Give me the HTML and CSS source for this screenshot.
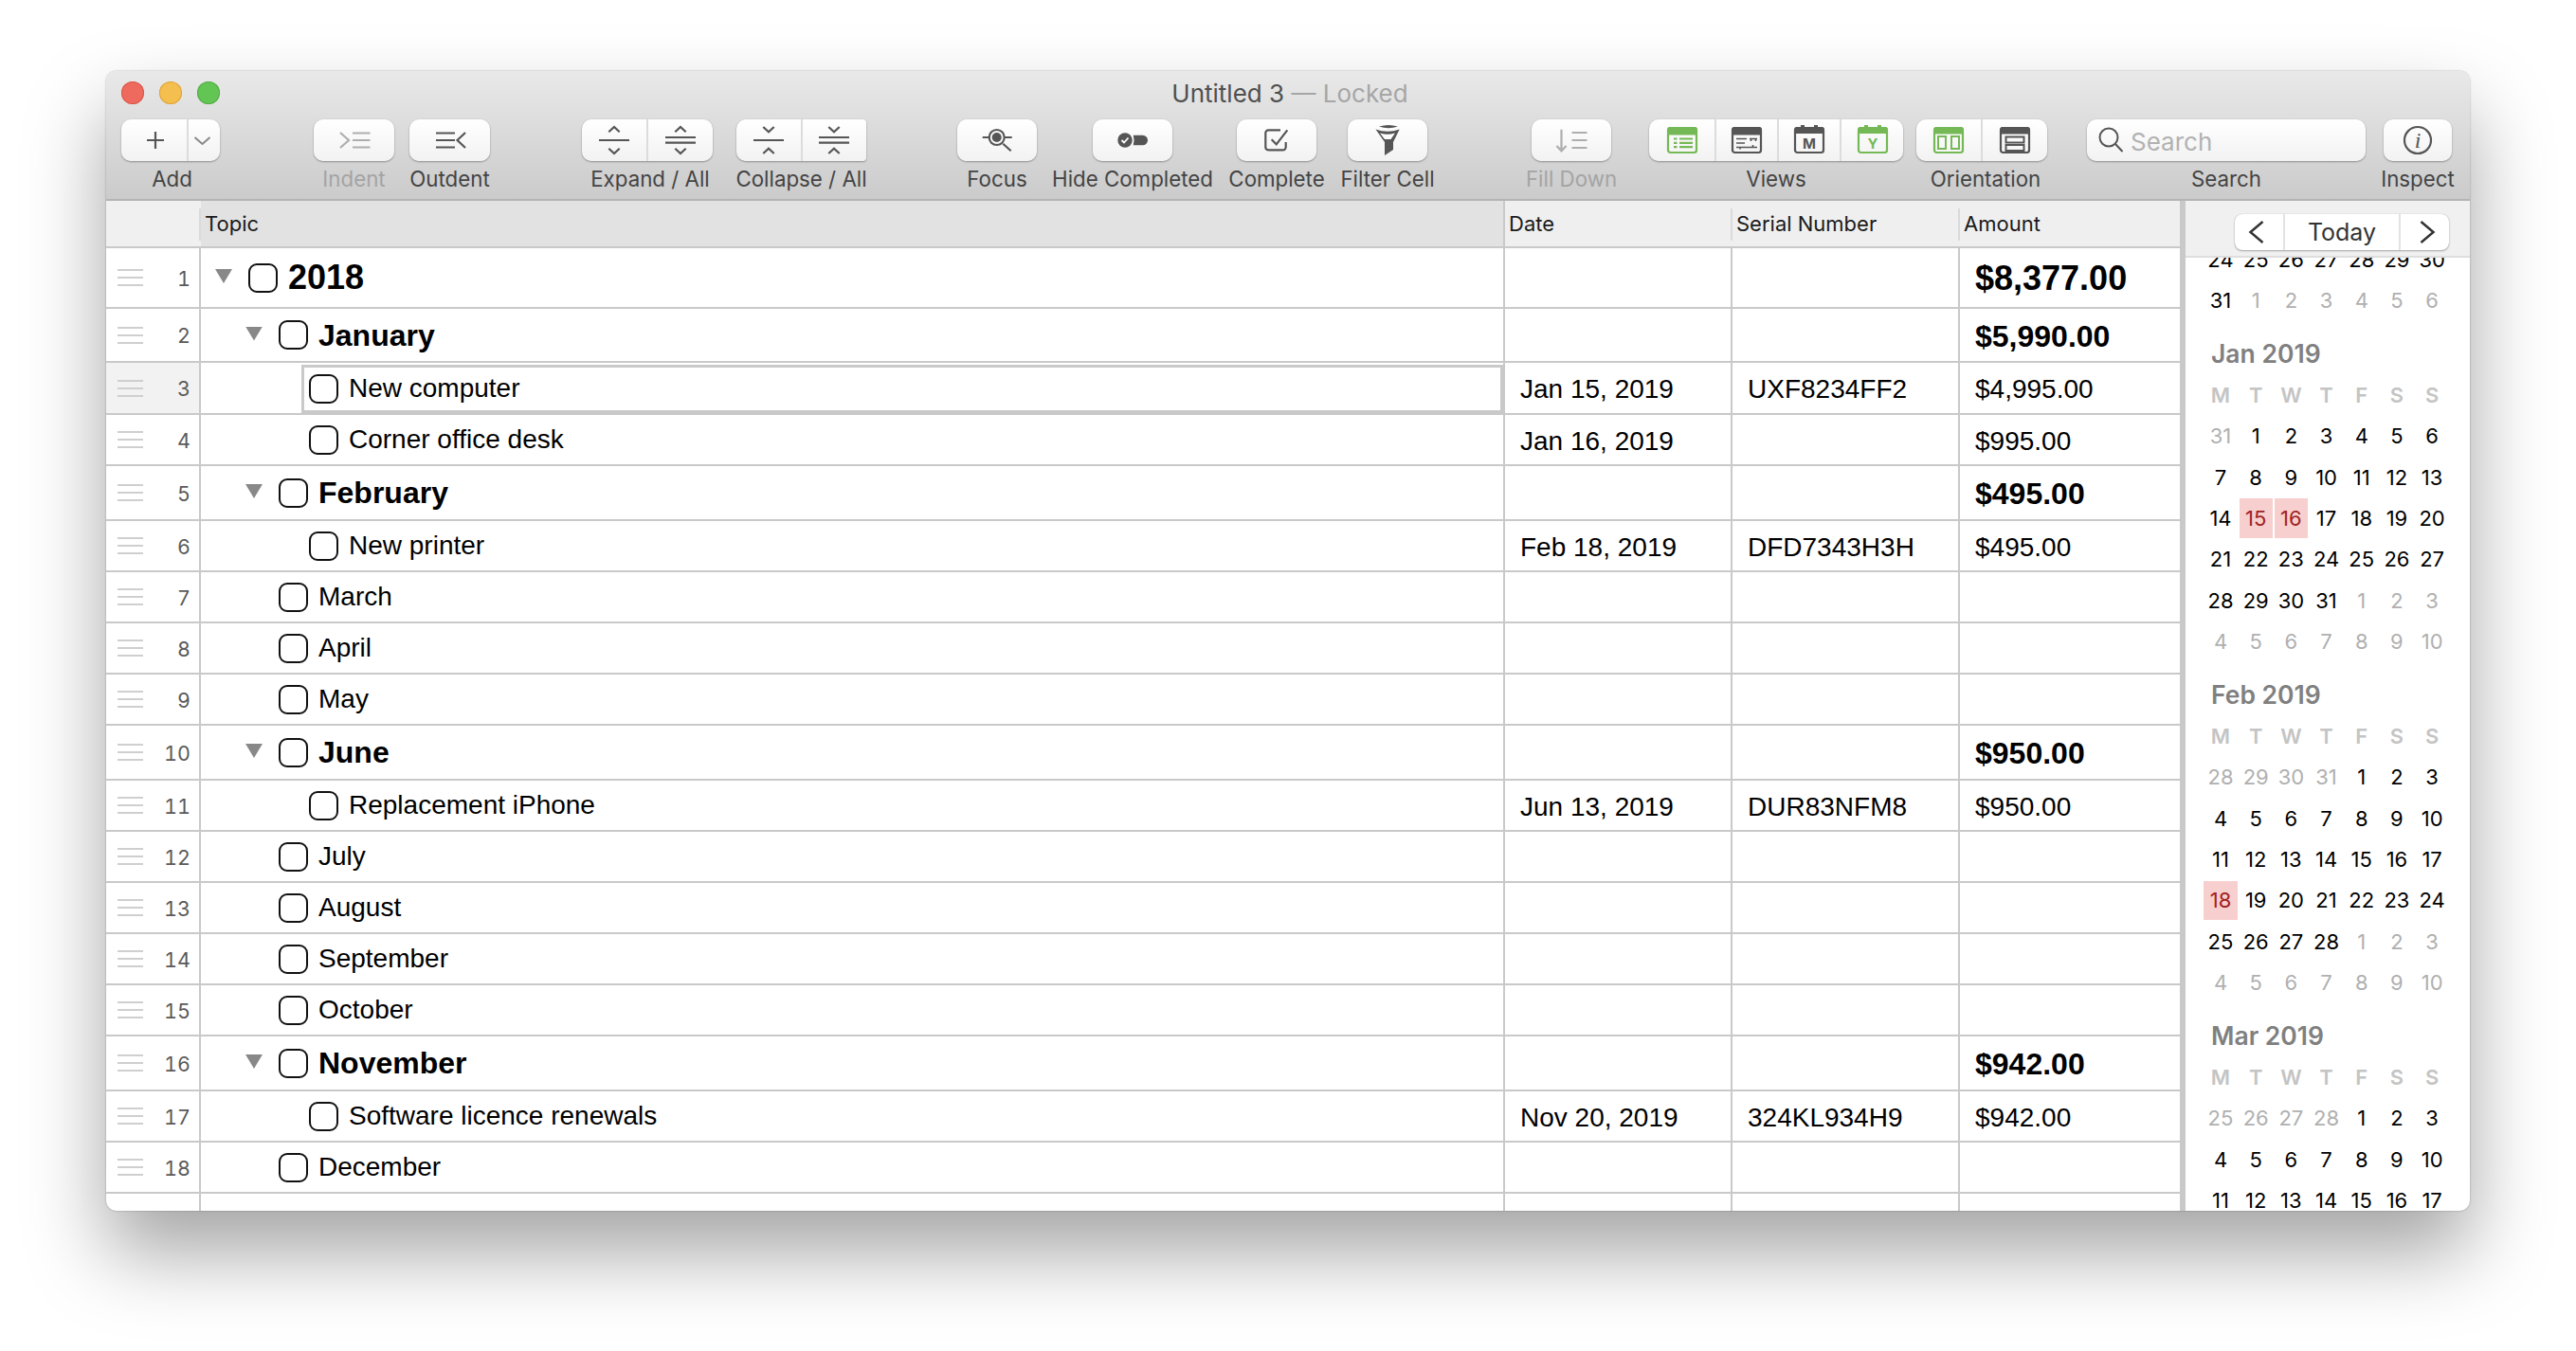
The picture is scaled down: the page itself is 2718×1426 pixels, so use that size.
FILE: index.html
```html
<!DOCTYPE html>
<html lang="en">
<head>
<meta charset="utf-8">
<title>Untitled 3 — Locked</title>
<link rel="stylesheet" href="styles.css">
</head>
<body>
<div class="window">
  <header class="chrome">
    <div class="titlebar">
      <div class="lights"><i class="light red"></i><i class="light yellow"></i><i class="light green"></i></div>
      <div class="title">Untitled 3 <span class="locked">— Locked</span></div>
      <div></div>
    </div>
    <div class="toolbar">
      <div class="tool t-add">
        <div class="btn">
          <div class="seg grow"><svg class="ic" viewBox="0 0 44 44"><path d="M23 13V31M14 22H32"/></svg></div>
          <div class="seg s-menu"><svg class="ic soft" viewBox="0 0 36 44"><path d="M7.500 19L15.500 26L23.500 19"/></svg></div>
        </div>
        <span class="lbl">Add</span>
      </div>
      <div class="tool t-indent">
        <div class="btn"><div class="seg grow"><svg class="ic dim" viewBox="0 0 44 44"><path d="M7 14L16 22L7 30M20 14.5H38.500M20 22H38.500M20 29.500H38.500"/></svg></div></div>
        <span class="lbl off">Indent</span>
      </div>
      <div class="tool t-outdent">
        <div class="btn"><div class="seg grow"><svg class="ic" viewBox="0 0 44 44"><path d="M38 14L29.500 22L38 30M7 14.5H27M7 22H27M7 29.500H27"/></svg></div></div>
        <span class="lbl">Outdent</span>
      </div>
      <div class="tool t-expand">
        <div class="btn">
          <div class="seg grow"><svg class="ic" viewBox="0 0 44 44"><path d="M16.3 13.300L22 8L27.700 13.300M6 22H38M16.300 30.700L22 36L27.700 30.700"/></svg></div>
          <div class="seg grow"><svg class="ic" viewBox="0 0 44 44"><path d="M16.3 13.300L22 8L27.700 13.300M6 19H38M6 24.700H38M16.300 30.700L22 36L27.700 30.700"/></svg></div>
        </div>
        <span class="lbl">Expand / All</span>
      </div>
      <div class="tool t-collapse">
        <div class="btn sharp">
          <div class="seg grow"><svg class="ic" viewBox="0 0 44 44"><path d="M16.3 8L22 13.300L27.700 8M6 22H38M16.300 36L22 30.700L27.700 36"/></svg></div>
          <div class="seg grow"><svg class="ic" viewBox="0 0 44 44"><path d="M16.3 8L22 13.300L27.700 8M6 19H38M6 24.700H38M16.300 36L22 30.700L27.700 36"/></svg></div>
        </div>
        <span class="lbl">Collapse / All</span>
      </div>
      <div class="tool t-focus">
        <div class="btn"><div class="seg grow"><svg class="ic" viewBox="0 0 44 44"><circle cx="21.700" cy="19" r="8"/><circle class="solid" cx="21.700" cy="19" r="5"/><path d="M6.700 19H13M30 19H37.700M28.300 25.700L36.700 33.300"/></svg></div></div>
        <span class="lbl">Focus</span>
      </div>
      <div class="tool t-hide">
        <div class="btn"><div class="seg grow"><svg class="ic" viewBox="0 0 44 44"><circle class="solid" cx="14" cy="22" r="7.700"/><path class="tick" d="M10.500 22L13 24.500L17.500 19.500"/><path class="solid" d="M22.700 16.700H32.700A5.300 5.300 0 0 1 32.700 27.300H22.700Q24.500 22 22.700 16.700Z"/></svg></div></div>
        <span class="lbl">Hide Completed</span>
      </div>
      <div class="tool t-complete">
        <div class="btn"><div class="seg grow"><svg class="ic" viewBox="0 0 44 44"><path d="M26 11.300H13.300A3 3 0 0 0 10.300 14.300V29.300A3 3 0 0 0 13.300 32.300H28.700A3 3 0 0 0 31.700 29.300V24M16.700 21.300L21.700 26.300L33.300 11.300"/></svg></div></div>
        <span class="lbl">Complete</span>
      </div>
      <div class="tool t-filter">
        <div class="btn"><div class="seg grow"><svg class="ic" viewBox="0 0 44 44"><path class="solid" d="M13 7.500Q23 4.500 33 7.500Q23 11 13 7.500Z"/><path class="solid" d="M9.500 10.500Q22 15 34.700 10.500L28 24V32L19 38V24Z"/><path class="hole" d="M14 14.500Q22 17 30 14.500L25.500 21H19Z"/></svg></div></div>
        <span class="lbl">Filter Cell</span>
      </div>
      <div class="tool t-fill">
        <div class="btn"><div class="seg grow"><svg class="ic dim" viewBox="0 0 44 44"><path d="M11.500 10.700V33.300M6.500 28L11.500 33.300L16.500 28M22.500 14H38.500M22.500 22H38.500M22.500 30H38.500"/></svg></div></div>
        <span class="lbl off">Fill Down</span>
      </div>
      <div class="tool t-views">
        <div class="btn">
          <div class="seg grow"><svg class="ic grn" viewBox="0 0 44 44"><rect x="7" y="9" width="30" height="26" rx="2.500"/><path class="solid" d="M6 11A3 3 0 0 1 9 8H35A3 3 0 0 1 38 11V16.500H6Z"/><path d="M13 20.500H16.500M19 20.500H33M13 24.800H16.500M19 24.800H33M13 29.100H16.500M19 29.100H33"/></svg></div>
          <div class="seg s-view2"><svg class="ic" viewBox="0 0 44 44"><rect x="7" y="9" width="30" height="26" rx="2.500"/><path class="solid" d="M6 11A3 3 0 0 1 9 8H35A3 3 0 0 1 38 11V16.500H6Z"/><path class="thin" d="M11 20.500H22M25 20.500H33M26.500 20.500V23M31.500 20.500V23M11 25H20M11 29.500H33M15 29.500V31.500M28.500 27V29.500"/></svg></div>
          <div class="seg s-view3"><svg class="ic" viewBox="0 0 44 44"><rect x="7" y="9" width="30" height="26" rx="2.500"/><path class="solid" d="M6 11A3 3 0 0 1 9 8H13V6H17V8H27V6H31V8H35A3 3 0 0 1 38 11V15H6Z"/><text class="cal-letter" x="22" y="30.500">M</text></svg></div>
          <div class="seg s-view4"><svg class="ic grn" viewBox="0 0 44 44"><rect x="7" y="9" width="30" height="26" rx="2.500"/><path class="solid" d="M6 11A3 3 0 0 1 9 8H13V6H17V8H27V6H31V8H35A3 3 0 0 1 38 11V15H6Z"/><text class="cal-letter" x="22" y="30.500">Y</text></svg></div>
        </div>
        <span class="lbl">Views</span>
      </div>
      <div class="tool t-orient">
        <div class="btn">
          <div class="seg grow"><svg class="ic grn" viewBox="0 0 44 44"><rect x="7" y="9" width="30" height="26" rx="2.500"/><path class="solid" d="M6 11A3 3 0 0 1 9 8H35A3 3 0 0 1 38 11V15.500H6Z"/><path class="mid" d="M11 18H19V31H11ZM25 18H33V31H25Z"/></svg></div>
          <div class="seg grow"><svg class="ic" viewBox="0 0 44 44"><rect x="7" y="9" width="30" height="26" rx="2.500"/><path class="solid" d="M6 11A3 3 0 0 1 9 8H35A3 3 0 0 1 38 11V15.500H6Z"/><path class="mid" d="M12.500 18.500H31.500V24.500H12.500ZM12.500 27H31.500V33H12.500Z"/></svg></div>
        </div>
        <span class="lbl">Orientation</span>
      </div>
      <div class="tool t-search">
        <div class="btn searchbox">
          <svg class="ic s-glass" viewBox="0 0 32 32"><circle cx="14" cy="14" r="9.500"/><path d="M21 21L28.500 29"/></svg>
          <span class="placeholder">Search</span>
        </div>
        <span class="lbl">Search</span>
      </div>
      <div class="tool t-inspect">
        <div class="btn"><div class="seg grow"><svg class="ic" viewBox="0 0 44 44"><circle cx="22" cy="22" r="14"/><text class="info-i" x="22" y="30">i</text></svg></div></div>
        <span class="lbl">Inspect</span>
      </div>
    </div>
  </header>

  <div class="main">
    <section class="table">
      <div class="row head">
        <div class="hcell h-gutter"></div>
        <div class="hcell h-topic">Topic</div>
        <div class="hcell h-sep">Date</div>
        <div class="hcell h-sep">Serial Number</div>
        <div class="hcell">Amount</div>
      </div>

      <div class="row r-top b0">
        <div class="gutter"><i class="grip"></i><span class="num">1</span></div>
        <div class="cell topic l0"><span class="twist"><i class="tri"></i></span><i class="check"></i><span class="name">2018</span></div>
        <div class="cell"></div><div class="cell"></div>
        <div class="cell amt">$8,377.00</div>
      </div>
      <div class="row r-jan b1">
        <div class="gutter"><i class="grip"></i><span class="num">2</span></div>
        <div class="cell topic l1"><span class="twist"><i class="tri"></i></span><i class="check"></i><span class="name">January</span></div>
        <div class="cell"></div><div class="cell"></div>
        <div class="cell amt">$5,990.00</div>
      </div>
      <div class="row r-sel">
        <div class="gutter sel-g"><i class="grip"></i><span class="num">3</span></div>
        <div class="cell topic"><div class="selbox"><i class="check"></i><span class="name">New computer</span></div></div>
        <div class="cell">Jan 15, 2019</div>
        <div class="cell">UXF8234FF2</div>
        <div class="cell amt">$4,995.00</div>
      </div>
      <div class="row r-n">
        <div class="gutter"><i class="grip"></i><span class="num">4</span></div>
        <div class="cell topic l2"><span class="twist"></span><i class="check"></i><span class="name">Corner office desk</span></div>
        <div class="cell">Jan 16, 2019</div>
        <div class="cell"></div>
        <div class="cell amt">$995.00</div>
      </div>
      <div class="row r-b b1">
        <div class="gutter"><i class="grip"></i><span class="num">5</span></div>
        <div class="cell topic l1"><span class="twist"><i class="tri"></i></span><i class="check"></i><span class="name">February</span></div>
        <div class="cell"></div><div class="cell"></div>
        <div class="cell amt">$495.00</div>
      </div>
      <div class="row r-n">
        <div class="gutter"><i class="grip"></i><span class="num">6</span></div>
        <div class="cell topic l2"><span class="twist"></span><i class="check"></i><span class="name">New printer</span></div>
        <div class="cell">Feb 18, 2019</div>
        <div class="cell">DFD7343H3H</div>
        <div class="cell amt">$495.00</div>
      </div>
      <div class="row r-n">
        <div class="gutter"><i class="grip"></i><span class="num">7</span></div>
        <div class="cell topic l1"><span class="twist"></span><i class="check"></i><span class="name">March</span></div>
        <div class="cell"></div><div class="cell"></div><div class="cell"></div>
      </div>
      <div class="row r-n">
        <div class="gutter"><i class="grip"></i><span class="num">8</span></div>
        <div class="cell topic l1"><span class="twist"></span><i class="check"></i><span class="name">April</span></div>
        <div class="cell"></div><div class="cell"></div><div class="cell"></div>
      </div>
      <div class="row r-n">
        <div class="gutter"><i class="grip"></i><span class="num">9</span></div>
        <div class="cell topic l1"><span class="twist"></span><i class="check"></i><span class="name">May</span></div>
        <div class="cell"></div><div class="cell"></div><div class="cell"></div>
      </div>
      <div class="row r-b b1">
        <div class="gutter"><i class="grip"></i><span class="num">10</span></div>
        <div class="cell topic l1"><span class="twist"><i class="tri"></i></span><i class="check"></i><span class="name">June</span></div>
        <div class="cell"></div><div class="cell"></div>
        <div class="cell amt">$950.00</div>
      </div>
      <div class="row r-n">
        <div class="gutter"><i class="grip"></i><span class="num">11</span></div>
        <div class="cell topic l2"><span class="twist"></span><i class="check"></i><span class="name">Replacement iPhone</span></div>
        <div class="cell">Jun 13, 2019</div>
        <div class="cell">DUR83NFM8</div>
        <div class="cell amt">$950.00</div>
      </div>
      <div class="row r-n">
        <div class="gutter"><i class="grip"></i><span class="num">12</span></div>
        <div class="cell topic l1"><span class="twist"></span><i class="check"></i><span class="name">July</span></div>
        <div class="cell"></div><div class="cell"></div><div class="cell"></div>
      </div>
      <div class="row r-n">
        <div class="gutter"><i class="grip"></i><span class="num">13</span></div>
        <div class="cell topic l1"><span class="twist"></span><i class="check"></i><span class="name">August</span></div>
        <div class="cell"></div><div class="cell"></div><div class="cell"></div>
      </div>
      <div class="row r-n">
        <div class="gutter"><i class="grip"></i><span class="num">14</span></div>
        <div class="cell topic l1"><span class="twist"></span><i class="check"></i><span class="name">September</span></div>
        <div class="cell"></div><div class="cell"></div><div class="cell"></div>
      </div>
      <div class="row r-n">
        <div class="gutter"><i class="grip"></i><span class="num">15</span></div>
        <div class="cell topic l1"><span class="twist"></span><i class="check"></i><span class="name">October</span></div>
        <div class="cell"></div><div class="cell"></div><div class="cell"></div>
      </div>
      <div class="row r-b b1">
        <div class="gutter"><i class="grip"></i><span class="num">16</span></div>
        <div class="cell topic l1"><span class="twist"><i class="tri"></i></span><i class="check"></i><span class="name">November</span></div>
        <div class="cell"></div><div class="cell"></div>
        <div class="cell amt">$942.00</div>
      </div>
      <div class="row r-n">
        <div class="gutter"><i class="grip"></i><span class="num">17</span></div>
        <div class="cell topic l2"><span class="twist"></span><i class="check"></i><span class="name">Software licence renewals</span></div>
        <div class="cell">Nov 20, 2019</div>
        <div class="cell">324KL934H9</div>
        <div class="cell amt">$942.00</div>
      </div>
      <div class="row r-n">
        <div class="gutter"><i class="grip"></i><span class="num">18</span></div>
        <div class="cell topic l1"><span class="twist"></span><i class="check"></i><span class="name">December</span></div>
        <div class="cell"></div><div class="cell"></div><div class="cell"></div>
      </div>
      <div class="row r-fill">
        <div class="gutter"></div><div class="cell"></div><div class="cell"></div><div class="cell"></div><div class="cell"></div>
      </div>
    </section>

    <aside class="sidebar">
      <div class="cal-head">
        <div class="nav">
          <div class="nav-arrow"><svg class="chev prev" viewBox="0 0 20 26"><path d="M16.500 2L3.500 13L16.500 24"/></svg></div>
          <div class="nav-today">Today</div>
          <div class="nav-arrow"><svg class="chev next" viewBox="0 0 20 26"><path d="M3.500 2L16.500 13L3.500 24"/></svg></div>
        </div>
      </div>
      <div class="cal-scroll">
        <div class="days tail">
          <span>24</span><span>25</span><span>26</span><span>27</span><span>28</span><span>29</span><span>30</span>
          <span>31</span><span class="o">1</span><span class="o">2</span><span class="o">3</span><span class="o">4</span><span class="o">5</span><span class="o">6</span>
        </div>

        <div class="month">
          <div class="month-name">Jan 2019</div>
          <div class="days wk"><span>M</span><span>T</span><span>W</span><span>T</span><span>F</span><span>S</span><span>S</span></div>
          <div class="days">
            <span class="o">31</span><span>1</span><span>2</span><span>3</span><span>4</span><span>5</span><span>6</span>
            <span>7</span><span>8</span><span>9</span><span>10</span><span>11</span><span>12</span><span>13</span>
            <span>14</span><span class="s">15</span><span class="s">16</span><span>17</span><span>18</span><span>19</span><span>20</span>
            <span>21</span><span>22</span><span>23</span><span>24</span><span>25</span><span>26</span><span>27</span>
            <span>28</span><span>29</span><span>30</span><span>31</span><span class="o">1</span><span class="o">2</span><span class="o">3</span>
            <span class="o">4</span><span class="o">5</span><span class="o">6</span><span class="o">7</span><span class="o">8</span><span class="o">9</span><span class="o">10</span>
          </div>
        </div>

        <div class="month">
          <div class="month-name">Feb 2019</div>
          <div class="days wk"><span>M</span><span>T</span><span>W</span><span>T</span><span>F</span><span>S</span><span>S</span></div>
          <div class="days">
            <span class="o">28</span><span class="o">29</span><span class="o">30</span><span class="o">31</span><span>1</span><span>2</span><span>3</span>
            <span>4</span><span>5</span><span>6</span><span>7</span><span>8</span><span>9</span><span>10</span>
            <span>11</span><span>12</span><span>13</span><span>14</span><span>15</span><span>16</span><span>17</span>
            <span class="s">18</span><span>19</span><span>20</span><span>21</span><span>22</span><span>23</span><span>24</span>
            <span>25</span><span>26</span><span>27</span><span>28</span><span class="o">1</span><span class="o">2</span><span class="o">3</span>
            <span class="o">4</span><span class="o">5</span><span class="o">6</span><span class="o">7</span><span class="o">8</span><span class="o">9</span><span class="o">10</span>
          </div>
        </div>

        <div class="month">
          <div class="month-name">Mar 2019</div>
          <div class="days wk"><span>M</span><span>T</span><span>W</span><span>T</span><span>F</span><span>S</span><span>S</span></div>
          <div class="days">
            <span class="o">25</span><span class="o">26</span><span class="o">27</span><span class="o">28</span><span>1</span><span>2</span><span>3</span>
            <span>4</span><span>5</span><span>6</span><span>7</span><span>8</span><span>9</span><span>10</span>
            <span>11</span><span>12</span><span>13</span><span>14</span><span>15</span><span>16</span><span>17</span>
          </div>
        </div>
      </div>
    </aside>
  </div>
</div>
</body>
</html>
```
FILE: styles.css
```css
* { box-sizing: border-box; }
html, body { margin: 0; height: 100%; background: #fff; overflow: hidden; }
body { padding: 75px 112px 0; font-family: "Liberation Sans", Arial, sans-serif; color: #000; }

.window {
  width: 2494px; height: 1203px; border-radius: 11px; overflow: hidden;
  display: flex; flex-direction: column; background: #fff;
  box-shadow: 0 0 2px rgba(0,0,0,.35), 0 44px 84px rgba(0,0,0,.36);
}

/* chrome */
.chrome {
  height: 137px; flex: none; border-bottom: 2px solid #b4b4b4;
  background: linear-gradient(#e9e9e9, #cbcbcb);
  font-family: Inter, "Liberation Sans", sans-serif;
}
.titlebar { height: 51px; display: grid; grid-template-columns: 1fr auto 1fr; align-items: center; padding-bottom: 5px; }
.lights { display: flex; gap: 16px; padding-left: 16px; }
.light { width: 24px; height: 24px; border-radius: 50%; display: block; }
.red { background: #ee6a5e; box-shadow: inset 0 0 0 1px #d9554a; }
.yellow { background: #f5bf4f; box-shadow: inset 0 0 0 1px #dca33a; }
.green { background: #62c554; box-shadow: inset 0 0 0 1px #52ab45; }
.title { font-size: 26px; color: #4f4f4f; padding-left: 4px; }
.locked { color: #a6a6a6; }

.toolbar { display: flex; height: 84px; }
.tool { display: flex; flex-direction: column; align-items: center; flex: none; }
.lbl { margin-top: 4.500px; font-size: 22.300px; line-height: 28px; color: #444; white-space: nowrap; }
.lbl.off { color: #a4a4a4; }
.t-add { width: 104px; margin-left: 16px; }
.t-add .lbl { margin-left: 3px; }
.t-indent { width: 85px; margin-left: 99px; }
.t-outdent { width: 85px; margin-left: 16px; }
.t-expand { width: 138px; margin-left: 97px; }
.t-expand .lbl { margin-left: 6px; }
.t-collapse { width: 137px; margin-left: 25px; }
.t-focus { width: 84px; margin-left: 96px; }
.t-hide { width: 84px; margin-left: 59px; }
.t-complete { width: 84px; margin-left: 68px; }
.t-filter { width: 84px; margin-left: 33px; }
.t-fill { width: 84px; margin-left: 110px; }
.t-views { width: 268px; margin-left: 40px; }
.t-orient { width: 138px; margin-left: 14px; }
.t-orient .lbl { margin-left: 8px; }
.t-search { width: 294px; margin-left: 42px; }
.t-inspect { width: 72px; margin-left: 19px; }

.btn {
  width: 100%; height: 44px; display: flex; flex: none; border-radius: 10px; overflow: hidden;
  background: linear-gradient(#ffffff, #f2f2f2);
  box-shadow: 0 1px 2px rgba(0,0,0,.32), 0 0 1px rgba(0,0,0,.18);
}
.btn.sharp { border-radius: 10px 4px 4px 10px; }
.seg { display: flex; align-items: center; justify-content: center; height: 100%; }
.seg + .seg { border-left: 2px solid #dcdcdc; }
.grow { flex: 1 1 0; }
.s-menu { width: 35px; flex: none; }
.s-view2 { width: 66px; flex: none; }
.s-view3 { width: 66px; flex: none; }
.s-view4 { width: 67px; flex: none; }

.ic { width: 44px; height: 44px; flex: none; fill: none; stroke: #555; stroke-width: 2.200; overflow: visible; }
.ic.soft { width: 36px; stroke: #888; stroke-width: 2; }
.ic.dim { stroke: #aeaeae; }
.ic.grn { stroke: #75b956; }
.ic .solid { fill: #555; stroke: none; }
.ic.grn .solid { fill: #75b956; }
.ic .tick { stroke: #fff; stroke-width: 1.800; }
.ic .hole { fill: #fff; stroke: none; }
.ic .thin { stroke-width: 1.600; }
.ic .mid { stroke-width: 2; }
.cal-letter { font: 700 15px Inter, "Liberation Sans", sans-serif; text-anchor: middle; fill: #555; stroke: none; }
.ic.grn .cal-letter { fill: #75b956; }
.info-i { font: italic 400 24px "Liberation Serif", serif; text-anchor: middle; fill: #555; stroke: none; }

.searchbox { align-items: center; padding-left: 9px; }
.s-glass { width: 32px; height: 32px; stroke-width: 2; margin-bottom: 2px; }
.placeholder { margin-left: 5px; font-size: 26px; color: #b2b2b2; margin-top: 2px; }

/* layout */
.main { flex: 1; min-height: 0; display: flex; }
.table { width: 2188px; flex: none; display: flex; flex-direction: column; }
.row {
  display: grid; grid-template-columns: 100px 1376px 240px 240px 232px;
  border-bottom: 2px solid #c9c9c9; flex: none;
}
.head { height: 50px; background: #efefef; font-family: Inter, "Liberation Sans", sans-serif; font-size: 22px; }
.hcell { display: flex; align-items: center; padding-left: 4px; color: #1a1a1a; }
.h-gutter { background: linear-gradient(#dadada, #dadada) right 8px / 2px 34px no-repeat #f0f0f0; }
.h-topic { background: #e2e2e2; border-right: 2px solid #c9c9c9; }
.h-sep { background: linear-gradient(#dadada, #dadada) right 8px / 2px 34px no-repeat; }

.r-top { height: 64px; }
.r-jan { height: 57px; }
.r-sel { height: 55px; }
.r-b { height: 58px; }
.r-n { height: 54px; }
.r-fill { flex: 1; border-bottom: none; }

.gutter { display: flex; align-items: center; justify-content: space-between; padding: 0 9px 0 12px; border-right: 2px solid #c9c9c9; }
.sel-g { background: #f2f2f2; }
.grip {
  display: block; width: 27px; height: 18px;
  background: linear-gradient(#cfcfcf, #cfcfcf) 0 0 / 100% 2px no-repeat,
              linear-gradient(#cfcfcf, #cfcfcf) 0 8px / 100% 2px no-repeat,
              linear-gradient(#cfcfcf, #cfcfcf) 0 16px / 100% 2px no-repeat;
}
.num { font-family: Inter, "Liberation Sans", sans-serif; font-size: 21.500px; color: #5a5a5a; font-variant-numeric: tabular-nums; margin-top: 1px; }

.cell { display: flex; align-items: center; padding: 3px 0 0 16px; border-right: 2px solid #c9c9c9; font-size: 28px; min-width: 0; }
.cell:last-child { border-right: none; }
.cell.topic { padding: 0; }
.cell.l0 { padding-left: 15px; }
.cell.l1 { padding-left: 47px; }
.cell.l2 { padding-left: 79px; }
.twist { width: 35px; flex: none; display: flex; align-items: center; }
.tri {
  display: block; width: 18px; height: 15px; background: #888; margin-top: -3px;
  clip-path: polygon(0 0, 100% 0, 50% 100%);
}
.check { display: block; width: 31px; height: 31px; flex: none; border: 2px solid #111; border-radius: 9px; }
.name { margin-left: 11px; white-space: nowrap; }
.b0 .name, .b0 .amt { font-size: 36px; font-weight: 700; }
.b1 .name, .b1 .amt { font-size: 32px; font-weight: 700; }
.b1 .name { padding-top: 1px; }
.b0 .cell.amt { padding-top: 1px; }

.selbox {
  flex: 1; align-self: stretch; margin: 2px 0 0 106px; display: flex; align-items: center;
  padding-left: 5px; border: 3px solid #c9c9c9;
}
.selbox .name { margin-top: -2px; }

/* sidebar */
.sidebar { flex: 1; border-left: 6px solid #c9c9c9; display: flex; flex-direction: column; min-width: 0; font-family: Inter, "Liberation Sans", sans-serif; }
.cal-head { height: 60px; flex: none; background: #f0f0f0; border-bottom: 2px solid #dedede; display: flex; justify-content: flex-end; padding: 14px 22px 0 0; }
.nav { width: 226px; height: 38px; display: flex; background: #fff; border-radius: 8px; box-shadow: 0 1px 2px rgba(0,0,0,.3), 0 0 1px rgba(0,0,0,.25); }
.nav-arrow { width: 51px; flex: none; display: flex; align-items: center; justify-content: center; }
.nav-today { flex: 1; text-align: center; font-size: 25px; line-height: 39px; color: #333; border-left: 2px solid #e2e2e2; border-right: 2px solid #e2e2e2; }
.chev { width: 20px; height: 26px; fill: none; stroke: #333; stroke-width: 2.500; margin-top: -1px; }
.chev.prev { margin-right: 5px; }
.chev.next { margin-left: 5px; }

.cal-scroll { flex: 1; min-height: 0; overflow: hidden; padding-left: 18.400px; }
.days { display: grid; grid-template-columns: repeat(7, 37.200px); grid-auto-rows: 43.340px; font-size: 22px; color: #000; }
.days span { display: flex; align-items: center; justify-content: center; white-space: nowrap; }
.days .o { color: #b0b0b0; }
.days .s { background: #f7cfcf; color: #a12222; margin: 1px 1px; }
.tail { margin-top: -20px; }
.wk { font-weight: 600; color: #c4c4c4; }
.month { padding-top: 13.400px; }
.month-name { padding-left: 8.600px; font-size: 26.500px; font-weight: 600; line-height: 43.300px; color: #808080; }
```
